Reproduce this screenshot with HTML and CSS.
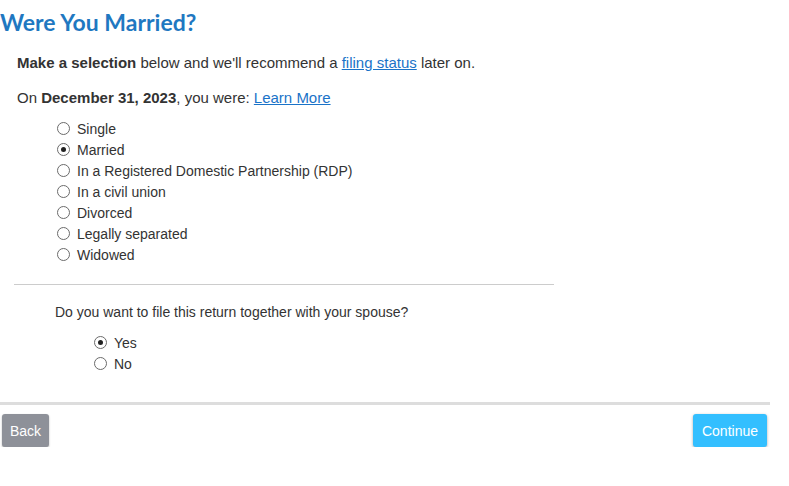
FILE: index.html
```html
<!DOCTYPE html>
<html>
<head>
  <meta charset="UTF-8">
  <title>Were You Married?</title>
  <link rel="stylesheet" href="styles.css">
</head>
<body>
  <h1 class="title">Were You Married?</h1>

  <div class="content">
    <p class="intro"><b>Make a selection</b> below and we'll recommend a <a href="#">filing status</a> later on.</p>
    <p class="intro"><span>On <b>December 31, 2023</b>, you were:</span> <a href="#">Learn More</a></p>

    <div class="options">
      <label class="opt"><input type="radio" name="status"> Single</label>
      <label class="opt"><input type="radio" name="status" checked> Married</label>
      <label class="opt"><input type="radio" name="status"> In a Registered Domestic Partnership (RDP)</label>
      <label class="opt"><input type="radio" name="status"> In a civil union</label>
      <label class="opt"><input type="radio" name="status"> Divorced</label>
      <label class="opt"><input type="radio" name="status"> Legally separated</label>
      <label class="opt"><input type="radio" name="status"> Widowed</label>
    </div>
  </div>

  <hr class="divider">

  <div class="followup">
    <p class="question">Do you want to file this return together with your spouse?</p>
    <div class="options sub">
      <label class="opt"><input type="radio" name="joint" checked> Yes</label>
      <label class="opt"><input type="radio" name="joint"> No</label>
    </div>
  </div>

  <div class="footer">
    <button class="btn back">Back</button>
    <button class="btn next">Continue</button>
  </div>
</body>
</html>
```

FILE: styles.css
```css
body { margin: 0; font-family: "Liberation Sans", Arial, sans-serif; font-size: 14px; color: #333; background: #fff; }
a { color: #1a73c8; }
.title { font-family: Lato, "Open Sans", sans-serif; font-weight: 700; font-size: 23px; line-height: 28px; color: #1f78c1; margin: 8px 0 0 0; }
.content { padding-left: 17px; }
.intro { margin: 0; font-size: 15px; line-height: 20px; }
.intro:first-child { margin-top: 17px; }
.intro + .intro { margin-top: 15px; }
.options { display: flex; flex-direction: column; padding-left: 40px; margin-top: 10px; }
.opt { display: flex; align-items: center; gap: 7px; height: 21px; }
.opt input { appearance: none; width: 13px; height: 13px; margin: 0; border: 1px solid #6b6b6b; border-radius: 50%; background: #fff; display: grid; place-items: center; }
.opt input:checked::after { content: ""; width: 5px; height: 5px; border-radius: 50%; background: #222; }
.divider { border: 0; border-top: 1px solid #ccc; width: 540px; margin: 19px 0 0 14px; }
.followup { padding-left: 55px; }
.question { margin: 17px 0 0 0; line-height: 20px; }
.options.sub { margin-top: 10px; padding-left: 39px; }
.footer { display: flex; justify-content: space-between; box-sizing: border-box; width: 770px; margin-top: 28px; border-top: 3px solid #ddd; padding: 9px 3px 0 2px; }
.btn { font-family: "Liberation Sans", Arial, sans-serif; font-size: 14px; color: #fff; border: 0; border-radius: 3px; height: 33px; }
.back { background: #8e9199; box-shadow: 0 1px 2px rgba(0,0,0,0.3); padding: 0 8px; }
.next { background: #33bfff; box-shadow: 0 1px 3px rgba(0,0,0,0.35); padding: 0 9px; }
```
